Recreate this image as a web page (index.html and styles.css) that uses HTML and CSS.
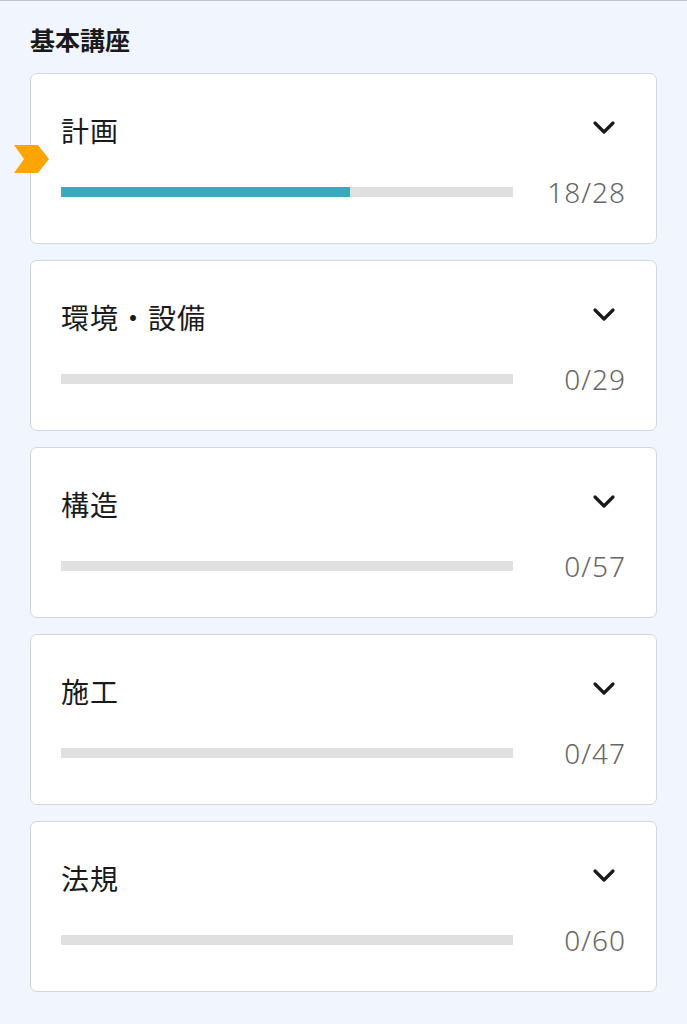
FILE: index.html
```html
<!DOCTYPE html>
<html lang="ja">
<head>
<meta charset="utf-8">
<link rel="stylesheet" href="styles.css">
</head>
<body>
<div class="page">
  <h2 class="section-title">基本講座</h2>
  <div class="cards">
    <div class="card current">
      <svg class="marker" width="36" height="30" viewBox="0 0 36 30"><polygon points="0,0 24,0 35,14 24,28 0,28 10,14" fill="#ffa500"/></svg>
      <div class="card-head"><span class="card-title">計画</span>
        <svg class="chev" width="24" height="16" viewBox="0 0 24 16"><polyline points="3,3 12,12 21,3" fill="none" stroke="#1a1a1a" stroke-width="3.2" stroke-linecap="round" stroke-linejoin="round"/></svg></div>
      <div class="progress-row"><div class="bar"><div class="fill" style="width:64%"></div></div><span class="count">18/28</span></div>
    </div>
    <div class="card">
      <div class="card-head"><span class="card-title">環境・設備</span>
        <svg class="chev" width="24" height="16" viewBox="0 0 24 16"><polyline points="3,3 12,12 21,3" fill="none" stroke="#1a1a1a" stroke-width="3.2" stroke-linecap="round" stroke-linejoin="round"/></svg></div>
      <div class="progress-row"><div class="bar"></div><span class="count">0/29</span></div>
    </div>
    <div class="card">
      <div class="card-head"><span class="card-title">構造</span>
        <svg class="chev" width="24" height="16" viewBox="0 0 24 16"><polyline points="3,3 12,12 21,3" fill="none" stroke="#1a1a1a" stroke-width="3.2" stroke-linecap="round" stroke-linejoin="round"/></svg></div>
      <div class="progress-row"><div class="bar"></div><span class="count">0/57</span></div>
    </div>
    <div class="card">
      <div class="card-head"><span class="card-title">施工</span>
        <svg class="chev" width="24" height="16" viewBox="0 0 24 16"><polyline points="3,3 12,12 21,3" fill="none" stroke="#1a1a1a" stroke-width="3.2" stroke-linecap="round" stroke-linejoin="round"/></svg></div>
      <div class="progress-row"><div class="bar"></div><span class="count">0/47</span></div>
    </div>
    <div class="card">
      <div class="card-head"><span class="card-title">法規</span>
        <svg class="chev" width="24" height="16" viewBox="0 0 24 16"><polyline points="3,3 12,12 21,3" fill="none" stroke="#1a1a1a" stroke-width="3.2" stroke-linecap="round" stroke-linejoin="round"/></svg></div>
      <div class="progress-row"><div class="bar"></div><span class="count">0/60</span></div>
    </div>
  </div>
</div>
</body>
</html>
```
FILE: styles.css
```css
html, body {
  margin: 0;
  padding: 0;
  background: #f0f5fe;
}
body {
  font-family: "Noto Sans CJK JP", "Noto Sans", sans-serif;
  color: #1a1a1a;
  border-top: 1px solid #bfc3ca;
  min-height: 1023px;
}
.page {
  padding: 0 30px;
}
.section-title {
  margin: 0;
  padding-top: 23px;
  height: 72px;
  box-sizing: border-box;
  font-size: 25px;
  line-height: 30px;
  font-weight: 700;
}
.cards {
  display: flex;
  flex-direction: column;
  gap: 16px;
}
.card {
  position: relative;
  background: #fff;
  border: 1px solid #d3d6df;
  border-radius: 7px;
  height: 171px;
  box-sizing: border-box;
  padding: 36px 30px 0 30px;
}
.marker {
  position: absolute;
  left: -17px;
  top: 71px;
}
.card-head {
  display: flex;
  align-items: center;
  justify-content: space-between;
  height: 40px;
}
.card-title {
  font-size: 28px;
  line-height: 40px;
  letter-spacing: 1px;
  margin-top: -1px;
}
.chev {
  margin-right: 10px;
  margin-top: -5px;
}
.progress-row {
  display: flex;
  align-items: center;
  height: 40px;
  margin-top: 22px;
}
.bar {
  flex: 1;
  height: 10px;
  background: #e0e0e0;
}
.fill {
  height: 100%;
  background: #3aa8bd;
}
.count {
  width: 113px;
  text-align: right;
  font-family: "Noto Sans", sans-serif;
  font-weight: 300;
  font-size: 28px;
  letter-spacing: 1px;
  color: #666;
  line-height: 40px;
}
```
